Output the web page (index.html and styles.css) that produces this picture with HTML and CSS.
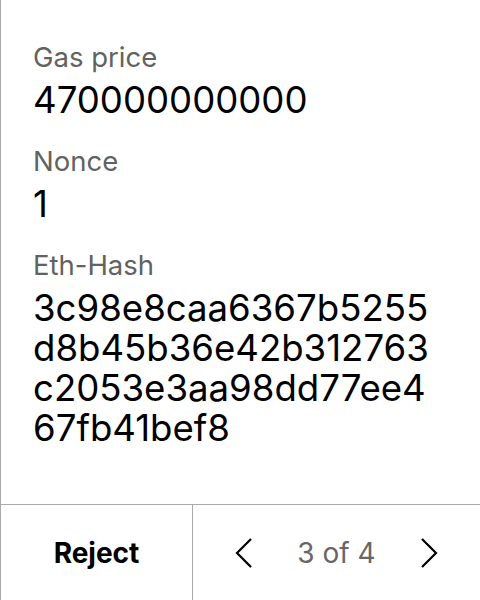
FILE: index.html
```html
<!DOCTYPE html>
<html>
<head>
<meta charset="utf-8">
<link rel="stylesheet" href="styles.css">
</head>
<body>
<div class="screen">
  <div class="details">
    <div class="field">
      <div class="label">Gas price</div>
      <div class="value">470000000000</div>
    </div>
    <div class="field">
      <div class="label">Nonce</div>
      <div class="value">1</div>
    </div>
    <div class="field">
      <div class="label">Eth-Hash</div>
      <div class="value hash">3c98e8caa6367b5255<br>d8b45b36e42b312763<br>c2053e3aa98dd77ee4<br>67fb41bef8</div>
    </div>
  </div>
  <div class="footer">
    <div class="reject">Reject</div>
    <div class="pager">
      <svg class="chev" width="18" height="30" viewBox="0 0 18 30"><path d="M16 1 L2 15 L16 29" fill="none" stroke="#000" stroke-width="2.2"/></svg>
      <span class="count">3 of 4</span>
      <svg class="chev" width="18" height="30" viewBox="0 0 18 30"><path d="M2 1 L16 15 L2 29" fill="none" stroke="#000" stroke-width="2.2"/></svg>
    </div>
  </div>
</div>
</body>
</html>
```
FILE: styles.css
```css
html, body {
  margin: 0;
  padding: 0;
  background: #fff;
}
body {
  font-family: Inter, "Noto Sans", sans-serif;
  color: #000;
}
.screen {
  width: 480px;
  height: 600px;
  box-sizing: border-box;
  border-left: 1px solid #aaa;
  display: flex;
  flex-direction: column;
}
.details {
  flex: 1;
  padding: 41px 32px 0 32px;
}
.field {
  margin-bottom: 25px;
}
.label {
  font-size: 27.5px;
  line-height: 32px;
  color: #626262;
  margin-bottom: 7px;
}
.value {
  font-size: 36.6px;
  line-height: 40px;
}
.footer {
  height: 96px;
  box-sizing: border-box;
  flex-shrink: 0;
  border-top: 1px solid #aaa;
  display: flex;
}
.reject {
  width: 191px;
  border-right: 1px solid #aaa;
  display: flex;
  align-items: center;
  justify-content: center;
  font-size: 28px;
  font-weight: 700;
}
.pager {
  flex: 1;
  display: flex;
  align-items: center;
  justify-content: space-between;
  padding: 0 42px;
}
.count {
  font-size: 28px;
  color: #666;
}
```
